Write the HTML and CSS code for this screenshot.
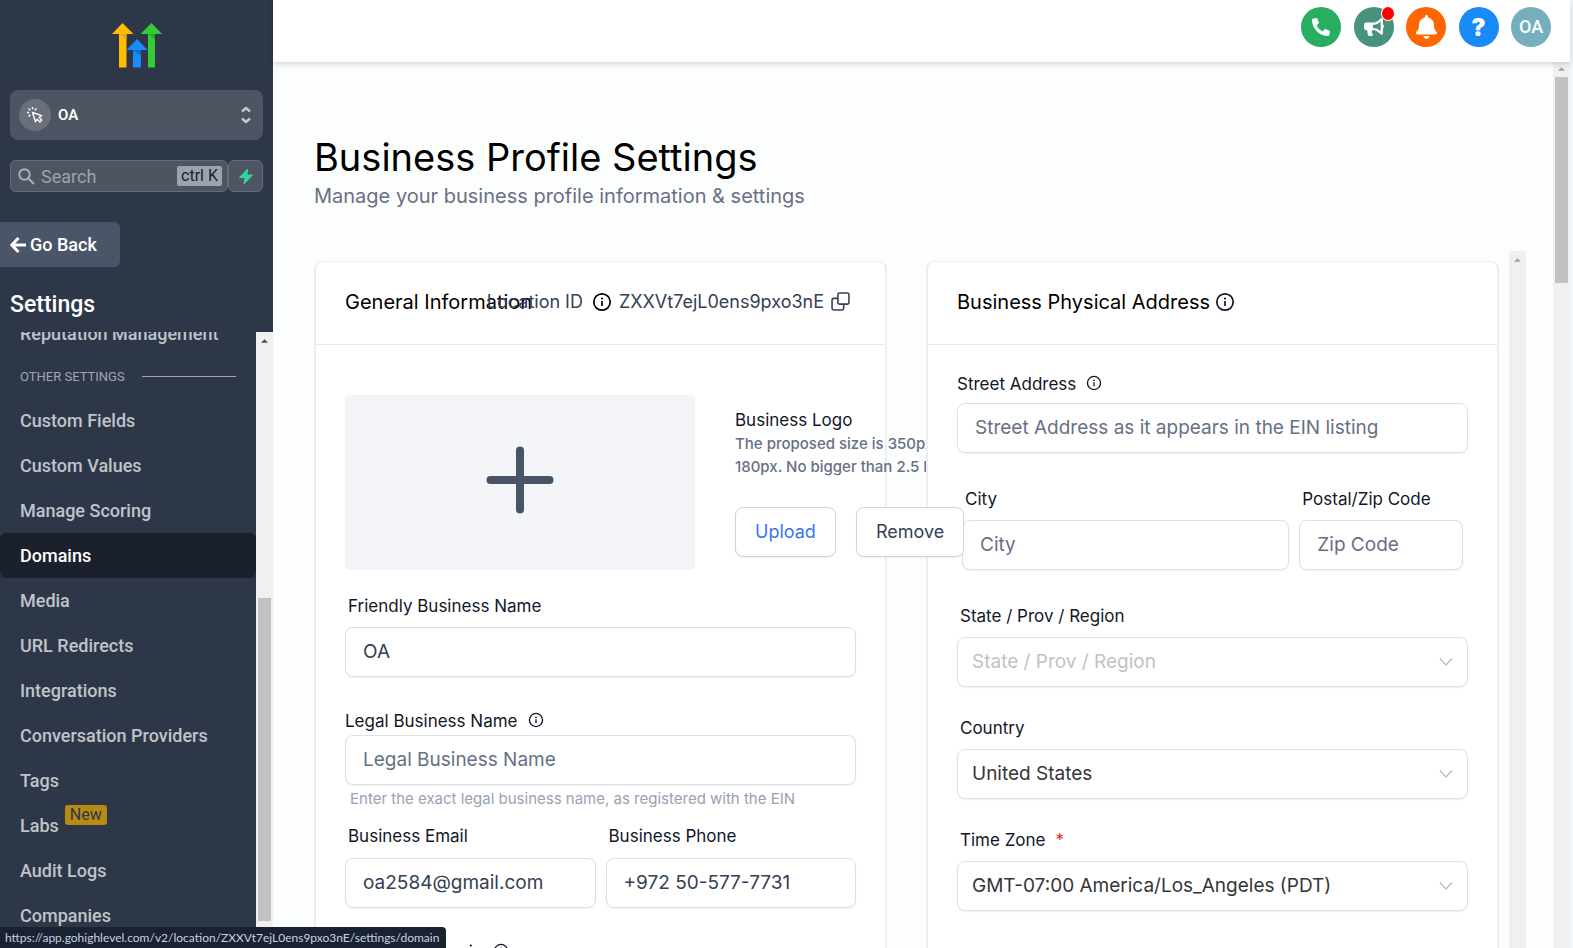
FILE: index.html
```html
<!DOCTYPE html>
<html lang="en">
<head>
<meta charset="utf-8">
<title>Business Profile Settings</title>
<link rel="stylesheet" href="styles.css">
</head>
<body>
<svg class="defs" aria-hidden="true">
  <symbol id="info" viewBox="0 0 20 20"><circle cx="10" cy="10" r="8.2" fill="none" stroke="currentColor" stroke-width="1.7"/><path d="M10 9v5" stroke="currentColor" stroke-width="1.7"/><circle cx="10" cy="6.6" r="1.1" fill="currentColor"/></symbol>
  <symbol id="chevron" viewBox="0 0 16 16"><path d="M2 4.500l6 6.500 6-6.500" fill="none" stroke="currentColor" stroke-width="1.300"/></symbol>
  <symbol id="up" viewBox="0 0 8 4"><path d="M0 4L4 0l4 4z" fill="currentColor"/></symbol>
</svg>
<div class="app">
  <aside class="sidebar">
    <div class="brand">
      <svg class="logo" viewBox="0 0 50 45" role="img" aria-label="HighLevel">
        <path d="M7 10h7.500v34.500H7z" fill="#ffbc00"/><path d="M7 10h7.500v7z" fill="#eda412"/><path d="M0 11L10.500 0 21.500 11z" fill="#ffbc00"/>
        <path d="M36 10h7v34.500h-7z" fill="#37ca37"/><path d="M36 10h7v7z" fill="#1fae22"/><path d="M28.500 11L39.500 0 50 11z" fill="#37ca37"/>
        <path d="M21 26h8v18.500h-8z" fill="#188bf6"/><path d="M21 27h8v6z" fill="#0d6fd6"/><path d="M14.500 27L25 16l10.500 11z" fill="#188bf6"/>
      </svg>
    </div>
    <button class="account" type="button">
      <span class="account-icon">
        <svg width="16" height="16" viewBox="0 0 16 16" fill="none" stroke="#fff" stroke-width="1.400" stroke-linejoin="round"><path d="M5.500 5.500l3 9.200 1.700-2.400 2.700 2.700 1.900-1.900-2.700-2.700 2.600-1.700z"/><path d="M5.500 0v2.200M1.600 1.600l1.600 1.600M0 5.500h2.200M1.600 9.400l1.600-1.600M9.400 1.600L7.800 3.200"/></svg>
      </span>
      <span class="account-name">OA</span>
      <svg width="10" height="18" viewBox="0 0 10 18" fill="none" stroke="#c3c8d0" stroke-width="2.500" stroke-linejoin="round"><path d="M1 5.500L5 2l4 3.500M1 12.500L5 16l4-3.500"/></svg>
    </button>
    <div class="search-row">
      <label class="search">
        <svg width="17" height="17" viewBox="0 0 17 17" fill="none" stroke="#a9afb8" stroke-width="2"><circle cx="6.500" cy="6.500" r="5.200"/><path d="M10.500 10.500l5.500 5.500"/></svg>
        <input type="text" placeholder="Search" aria-label="Search">
        <kbd>ctrl K</kbd>
      </label>
      <button class="bolt" type="button" aria-label="Quick actions"><svg width="14" height="15" viewBox="0 0 14 15"><path d="M8.500 0L.5 8.500H6L5 15l8.500-9H8.200z" fill="#34d399" stroke="#34d399" stroke-linejoin="round"/></svg></button>
    </div>
    <button class="back" type="button"><svg width="16" height="16" viewBox="0 0 16 16" fill="none" stroke="#fff" stroke-width="3"><path d="M8.500 1L1.800 8l6.700 7M2 8h14"/></svg>Go Back</button>
    <h2 class="side-title">Settings</h2>
    <div class="side-scroll">
      <nav class="menu">
        <a href="#">Reputation Management</a>
        <div class="group">OTHER SETTINGS</div>
        <a href="#">Custom Fields</a>
        <a href="#">Custom Values</a>
        <a href="#">Manage Scoring</a>
        <a href="#" class="active">Domains</a>
        <a href="#">Media</a>
        <a href="#">URL Redirects</a>
        <a href="#">Integrations</a>
        <a href="#">Conversation Providers</a>
        <a href="#">Tags</a>
        <a href="#">Labs <span class="badge">New</span></a>
        <a href="#">Audit Logs</a>
        <a href="#">Companies</a>
      </nav>
      <div class="track side-track"><svg class="arrow dark"><use href="#up"/></svg><div class="thumb"></div></div>
    </div>
  </aside>
  <div class="main">
    <header class="topbar">
      <div class="actions">
        <button class="round green" type="button" aria-label="Phone"><svg width="18" height="18" viewBox="0 0 512 512"><path transform="matrix(-1 0 0 1 512 0)" fill="#fff" d="M493.400 24.600l-104-24c-11.300-2.600-22.900 3.300-27.500 13.900l-48 112c-4.200 9.800-1.400 21.300 6.900 28l60.600 49.600c-36 76.700-98.900 140.500-177.200 177.200l-49.600-60.600c-6.800-8.300-18.200-11.100-28-6.900l-112 48C3.900 366.500-2 378.100.6 389.400l24 104C27.100 504.200 36.700 512 48 512c256.100 0 464-207.500 464-464 0-11.200-7.700-20.900-18.600-23.400z"/></svg></button>
        <button class="round teal" type="button" aria-label="Announcements"><svg width="20" height="18" viewBox="0 0 576 512"><path fill="#fff" d="M576 240c0-23.630-12.950-44.040-32-55.120V32.010C544 23.260 537.020 0 512 0c-7.120 0-14.190 2.380-19.980 7.020l-85.030 68.030C364.280 109.190 310.660 128 256 128H64c-35.350 0-64 28.650-64 64v96c0 35.350 28.650 64 64 64h33.700c-1.390 10.480-2.180 21.140-2.180 32 0 39.770 9.260 77.350 25.560 110.940 5.190 10.690 16.520 17.060 28.400 17.060h74.280c26.050 0 41.690-29.840 25.900-50.560-16.400-21.520-26.150-48.360-26.150-77.440 0-11.110 1.620-21.790 4.410-32H256c54.660 0 108.280 18.810 150.980 52.950l85.030 68.030a32.023 32.023 0 0 0 19.980 7.020c24.920 0 32-22.780 32-32V295.130C563.050 284.040 576 263.630 576 240zm-96 141.420l-33.050-26.440C392.950 311.780 325.120 288 256 288v-96c69.120 0 136.950-23.780 190.950-66.980L480 98.580v282.840z"/></svg><span class="dot"></span></button>
        <button class="round orange" type="button" aria-label="Notifications"><svg width="21" height="24" viewBox="0 0 448 512"><path fill="#fff" d="M224 512c35.320 0 63.970-28.650 63.970-64H160.030c0 35.350 28.650 64 63.970 64zm215.390-149.710c-19.320-20.760-55.470-51.990-55.470-154.290 0-77.700-54.480-139.900-127.940-155.160V32c0-17.670-14.320-32-31.980-32s-31.980 14.330-31.980 32v20.840C118.560 68.100 64.080 130.300 64.080 208c0 102.300-36.150 133.530-55.470 154.290-6 6.450-8.660 14.160-8.610 21.710.11 16.400 12.980 32 32.100 32h383.800c19.120 0 32-15.600 32.100-32 .05-7.550-2.610-15.270-8.610-21.710z"/></svg></button>
        <button class="round blue" type="button">?</button>
        <button class="round avatar" type="button">OA</button>
      </div>
    </header>
    <div class="body">
      <main class="content">
        <h1>Business Profile Settings</h1>
        <p class="sub">Manage your business profile information &amp; settings</p>
        <div class="panes">
          <div class="cards">
            <section class="card">
              <div class="card-head general-head">
                <h3>General Information</h3>
                <div class="location"><span class="loc-label">Location ID</span><svg class="info big"><use href="#info"/></svg><span class="loc-id">ZXXVt7ejL0ens9pxo3nE</span><svg class="copy" width="19" height="19" viewBox="0 0 18 18" fill="none" stroke="#344054" stroke-width="1.500"><rect x="6.500" y="1" width="10.500" height="10.500" rx="1.500"/><path d="M6.500 6H2.500A1.500 1.500 0 0 0 1 7.500v8A1.500 1.500 0 0 0 2.500 17h8a1.500 1.500 0 0 0 1.500-1.500v-4"/></svg></div>
              </div>
              <div class="card-body general">
                <div class="logo-row">
                  <button class="drop" type="button" aria-label="Add logo"><svg width="68" height="68" viewBox="0 0 68 68" stroke="#475467" stroke-width="8" stroke-linecap="round"><path d="M34 4.500v59M4.500 34h59"/></svg></button>
                  <div class="logo-side">
                    <div class="logo-title">Business Logo</div>
                    <p class="logo-note">The proposed size is 350px *<br>180px. No bigger than 2.5 MB</p>
                    <div class="logo-actions"><button class="btn primary" type="button">Upload</button><button class="btn" type="button">Remove</button></div>
                  </div>
                </div>
                <div class="field friendly"><label class="inset" for="fbn">Friendly Business Name</label><input id="fbn" class="box" type="text" value="OA"></div>
                <div class="field legal"><label for="lbn">Legal Business Name <svg class="info"><use href="#info"/></svg></label><input id="lbn" class="box" type="text" placeholder="Legal Business Name"><p class="hint">Enter the exact legal business name, as registered with the EIN</p></div>
                <div class="pair">
                  <div class="field"><label class="inset" for="em">Business Email</label><input id="em" class="box" type="text" value="oa2584@gmail.com"></div>
                  <div class="field"><label class="inset" for="ph">Business Phone</label><input id="ph" class="box" type="text" value="+972 50-577-7731"></div>
                </div>
                <div class="field domain"><label for="dm">Business Domain <svg class="info"><use href="#info"/></svg></label><input id="dm" class="box" type="text"></div>
              </div>
            </section>
            <section class="card">
              <div class="card-head"><h3>Business Physical Address</h3><svg class="info big"><use href="#info"/></svg></div>
              <div class="card-body address">
                <div class="field street"><label for="st">Street Address <svg class="info"><use href="#info"/></svg></label><input id="st" class="box" type="text" placeholder="Street Address as it appears in the EIN listing"></div>
                <div class="city-row">
                  <div class="field"><label class="inset" for="ci">City</label><input id="ci" class="box" type="text" placeholder="City"></div>
                  <div class="field"><label class="inset" for="zp">Postal/Zip Code</label><input id="zp" class="box" type="text" placeholder="Zip Code"></div>
                </div>
                <div class="field"><label class="inset" for="sp">State / Prov / Region</label><div class="select"><select id="sp" class="box empty"><option>State / Prov / Region</option></select><svg class="chev"><use href="#chevron"/></svg></div></div>
                <div class="field"><label class="inset" for="co">Country</label><div class="select"><select id="co" class="box"><option>United States</option></select><svg class="chev"><use href="#chevron"/></svg></div></div>
                <div class="field"><label class="inset" for="tz">Time Zone <span class="req">*</span></label><div class="select"><select id="tz" class="box"><option>GMT-07:00 America/Los_Angeles (PDT)</option></select><svg class="chev"><use href="#chevron"/></svg></div></div>
              </div>
            </section>
          </div>
          <div class="track"><svg class="arrow"><use href="#up"/></svg></div>
        </div>
      </main>
      <div class="track page-track"><svg class="arrow"><use href="#up"/></svg><div class="thumb"></div></div>
    </div>
  </div>
</div>
<div class="status">https://app.gohighlevel.com/v2/location/ZXXVt7ejL0ens9pxo3nE/settings/domain</div>
</body>
</html>
```
FILE: styles.css
```css
* { box-sizing: border-box; }
body { margin: 0; background: #f1f6fa; font-family: Inter, sans-serif; color: #101828; }
h1, h2, h3, p { margin: 0; font-weight: 400; }
button, input, select { font: inherit; color: inherit; }
button { cursor: pointer; }
.defs { position: absolute; width: 0; height: 0; }
.app { display: flex; height: 100vh; overflow: hidden; padding-right: 3px; }

/* Sidebar */
.sidebar { flex: none; width: 273px; background: #2d3748; font-family: Roboto, sans-serif; display: flex; flex-direction: column; color: #fff; }
.brand { height: 90px; padding: 23px 0 0 112px; }
.logo { width: 50px; height: 45px; display: block; }
.account { height: 50px; margin: 0 10px; padding: 0 12px 0 9px; border: 0; border-radius: 8px; background: #4d5562; display: flex; align-items: center; color: #fff; }
.account-icon { width: 32px; height: 32px; border-radius: 50%; background: #6a707b; display: flex; align-items: center; justify-content: center; }
.account-name { flex: 1; text-align: left; margin-left: 7px; font-size: 15px; font-weight: 600; }
.search-row { display: flex; margin: 20px 10px 0; height: 32px; }
.search { flex: 1; min-width: 0; display: flex; align-items: center; border: 1px solid #666d79; border-radius: 6px; background: #4d5562; padding: 0 5px 0 7px; }
.search input { flex: 1; width: 0; min-width: 0; border: 0; background: none; padding: 0 0 0 6px; font-size: 18px; outline: none; }
.search input::placeholder { color: #9ca3af; opacity: 1; }
kbd { flex: none; font: 16px/20px Roboto, sans-serif; background: #9ca3af; color: #1a202c; border-radius: 2px; padding: 0 4px; }
.bolt { flex: none; width: 35px; border: 1px solid #666d79; border-radius: 6px; background: #4d5562; padding: 0; display: flex; align-items: center; justify-content: center; }
.back { width: 120px; height: 45px; margin-top: 30px; border: 0; border-radius: 0 6px 6px 0; background: #4a5568; color: #fff; font-size: 18px; font-weight: 500; padding: 0 0 0 10px; display: flex; align-items: center; gap: 4px; white-space: nowrap; }
.side-title { font-size: 23px; font-weight: 500; line-height: 28px; padding: 24px 0 13px 10px; }
.side-scroll { flex: 1; min-height: 0; display: flex; overflow: hidden; }
.menu { flex: 1; margin-top: -21px; }
.menu a { display: flex; align-items: center; height: 45px; padding-left: 20px; color: #c0c3c8; font-size: 18px; font-weight: 500; text-decoration: none; white-space: nowrap; }
.menu .active { background: #1a202c; color: #fff; border-radius: 6px; }
.group { display: flex; align-items: center; gap: 17px; height: 42px; padding: 0 20px 2px; font-size: 13px; color: #a0a6af; white-space: nowrap; }
.group::after { content: ""; flex: 1; height: 1px; background: #a0a6af; }
.badge { align-self: flex-start; margin: 2px 0 0 6px; padding: 0 5px; font-size: 16px; font-weight: 400; line-height: 20px; border-radius: 3px; background: #b98b14; color: #2d3748; }

/* Scroll tracks */
.track { flex: none; width: 17px; background: #f0f0f0; display: flex; flex-direction: column; align-items: center; }
.arrow { width: 7px; height: 4px; margin-top: 7px; color: #a0a0a0; flex: none; }
.dark { color: #505050; }
.thumb { width: 13px; background: #c1c1c1; }
.side-track .thumb { margin-top: auto; margin-bottom: 27px; height: 323px; }
.page-track .arrow { margin-top: 5px; }
.page-track .thumb { margin-top: 6px; height: 206px; }

/* Top bar */
.main { flex: 1; min-width: 0; display: flex; flex-direction: column; }
.topbar { flex: none; height: 62px; background: #fff; box-shadow: 0 2px 5px rgba(0,0,0,.16); z-index: 3; display: flex; justify-content: flex-end; padding: 7px 19px; }
.actions { width: 250px; display: flex; justify-content: space-between; }
.round { position: relative; width: 40px; height: 40px; border: 0; border-radius: 50%; padding: 0; color: #fff; display: flex; align-items: center; justify-content: center; }
.green { background: #27ae60; }
.teal { background: #47937d; }
.orange { background: #ff6600; }
.blue { background: #188bf6; font-weight: 900; font-size: 24px; }
.avatar { background: #76afbc; font: 500 18px/40px Roboto, sans-serif; }
.dot { position: absolute; top: 0; right: 0; width: 12px; height: 13px; border-radius: 50%; background: #f00; box-shadow: 0 0 0 1px #fff; }

/* Content */
.body { flex: 1; min-height: 0; display: flex; background: #fcfefe; }
.content { flex: 1; min-width: 0; display: flex; flex-direction: column; padding: 71px 27px 0 41px; }
h1 { font-size: 38px; line-height: 48px; color: #000; }
.sub { font-size: 20px; line-height: 28px; margin-top: 1px; color: #667085; }
.panes { flex: 1; min-height: 0; display: flex; margin-top: 41px; }
.cards { flex: 1; min-width: 0; display: grid; grid-template-columns: 1fr 1fr; gap: 39px; padding: 10px 10px 0 0; overflow: hidden; }
.card { min-width: 0; height: 900px; border: 2px solid #ebeef2; border-top-width: 1px; border-radius: 8px; background: #fff; }
.card-head { height: 83px; border-bottom: 1px solid #e6e8ec; padding: 0 29px 3px; display: flex; align-items: center; gap: 5px; }
h3 { font-size: 20px; line-height: 28px; color: #000; white-space: nowrap; }
.general-head { justify-content: space-between; padding-right: 35px; gap: 0; }
.general-head h3 { width: 0; }
.location { flex: none; display: flex; align-items: center; color: #344054; font-size: 18px; white-space: nowrap; }
.loc-label { margin-right: 9px; }
.loc-id { margin: 0 7px; }
.location .big { color: #000; }
.info { width: 16px; height: 16px; margin: 0 0 3px 5px; color: #101828; }
.big { width: 20px; height: 20px; margin: 0; flex: none; }
.card-body { padding: 0 29px; }
.logo-row { display: flex; gap: 40px; padding-top: 50px; }
.drop { flex: none; width: 350px; height: 175px; border: 0; border-radius: 4px; background: #f2f4f7; padding: 0 0 6px; display: flex; align-items: center; justify-content: center; }
.logo-side { white-space: nowrap; padding-top: 13px; width: 0; }
.logo-title { font-size: 17px; line-height: 24px; }
.logo-note { font-size: 15px; font-weight: 500; line-height: 23px; color: #667085; }
.logo-actions { position: relative; z-index: 2; display: flex; gap: 20px; margin-top: 29px; }
.btn { flex: none; height: 50px; padding: 0 19px 1px; border: 1px solid #d0d5dd; border-radius: 8px; background: #fff; font-size: 18px; color: #344054; box-shadow: 0 1px 2px rgba(16,24,40,.06); }
.primary { color: #3b74f0; }
.field label { display: flex; align-items: center; gap: 5px; font-size: 17px; line-height: 24px; white-space: nowrap; }
.field .inset { padding-left: 3px; }
.box { display: block; width: 100%; height: 50px; border: 1px solid #dcdfe4; border-radius: 8px; background: #fff; box-shadow: 0 1px 2px rgba(16,24,40,.06); padding: 0 17px 2px; font-size: 19px; color: #344054; outline: none; }
.box::placeholder { color: #667085; opacity: 1; }
.friendly { padding-top: 24px; }
.friendly .box { margin-top: 9px; }
.legal { padding-top: 32px; }
.legal .box { margin-top: 2px; }
.hint { font-size: 15px; line-height: 22px; margin-top: 3px; padding-left: 5px; color: #98a2b3; white-space: nowrap; }
.pair { display: grid; grid-template-columns: 1fr 1fr; gap: 10px; padding-top: 14px; }
.pair .box { margin-top: 10px; }
.domain { padding-top: 32px; }
.address { padding-top: 27px; display: grid; gap: 29px; }
.address .street { display: grid; gap: 7px; }
.city-row { display: grid; grid-template-columns: 2fr 1fr; gap: 10px; padding: 0 5px; margin: 5px 0; }
.address .field .box { margin: 0; }
.address .inset { margin-bottom: 9px; }
.select { position: relative; }
select.box { appearance: none; padding: 0 40px 2px 14px; color: #333639; }
select.empty { color: #c2c2c2; }
.chev { position: absolute; right: 14px; top: 17px; width: 16px; height: 16px; color: #b8bcc4; pointer-events: none; }
.req { color: #d92d20; margin-left: 5px; }

.status { position: fixed; left: 0; bottom: 0; z-index: 5; height: 21px; padding: 0 7px 0 5px; background: #1a2130; color: #c5d3e6; border-top-right-radius: 4px; font: 12px/21px Lato, sans-serif; white-space: nowrap; }
```
